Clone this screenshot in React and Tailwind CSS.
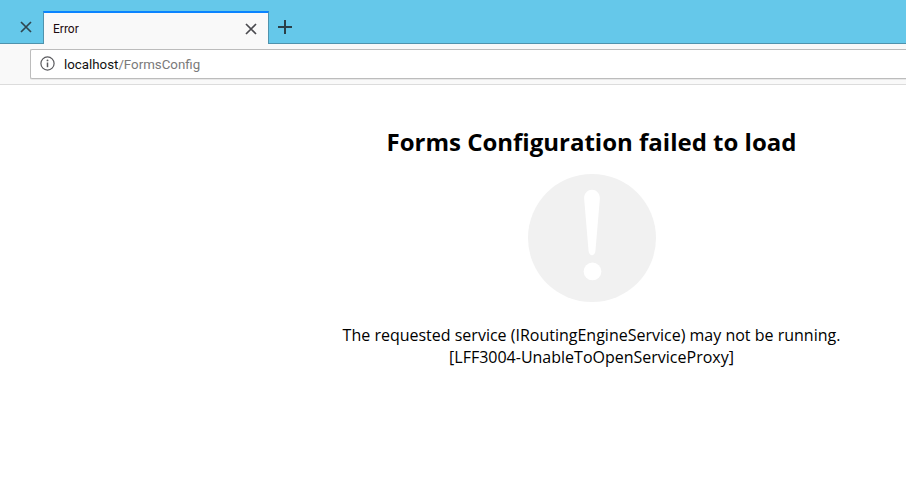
export default function App() {
  return (
    <div className="w-[906px] h-[481px] bg-white overflow-hidden flex flex-col font-['Open_Sans',sans-serif]">
      <div className="h-[44px] bg-[#65c8ea] border-b border-[#4f93ad] flex items-end relative">
        <div className="w-[43px] h-[33px] flex items-center justify-center pl-[9px]">
          <svg width="12" height="12" viewBox="0 0 12 12" className="mt-[1px]"><path d="M1 1 11 11M11 1 1 11" stroke="#2f4650" strokeWidth="1.7" fill="none" /></svg>
        </div>
        <div className="w-[226px] h-[33px] -mb-px bg-[#f9f9f9] border-t-2 border-[#0a84ff] border-x border-x-[#4f93ad] flex items-center pl-[9px] pr-[11px] justify-between">
          <span className="text-[12px] text-[#1c0a10] font-['Roboto',sans-serif] leading-none">Error</span>
          <svg width="12" height="12" viewBox="0 0 12 12"><path d="M1 1 11 11M11 1 1 11" stroke="#4a4a4f" strokeWidth="1.7" fill="none" /></svg>
        </div>
        <div className="w-[32px] h-[33px] flex items-center justify-center">
          <svg width="14" height="14" viewBox="0 0 14 14"><path d="M7 0V14M0 7H14" stroke="#2a3f48" strokeWidth="2" fill="none" /></svg>
        </div>
      </div>
      <div className="h-[41px] bg-[#f9f9f9] border-b border-[#dcdcdc] pl-[30px] pt-[5px]">
        <div className="h-[30px] bg-white border border-[#bcbcbc] rounded-l-[2px] border-r-0 flex items-center pl-[9px] shadow-[0_1px_0_#e8e8e8]">
          <svg width="15" height="15" viewBox="0 0 15 15" className="mr-[9px] -mt-[1px]">
            <circle cx="7.5" cy="7.5" r="6.6" stroke="#5b5b5f" strokeWidth="1.2" fill="none" />
            <path d="M7.5 6.5V11.2" stroke="#5b5b5f" strokeWidth="1.5" />
            <circle cx="7.5" cy="4.4" r="0.95" fill="#5b5b5f" />
          </svg>
          <span className="text-[13.3px] leading-none text-[#111] font-['Roboto',sans-serif] mt-[1px]">localhost<span className="text-[#7a7a7a]">/FormsConfig</span></span>
        </div>
      </div>
      <div className="flex-1 pl-[277px] flex flex-col items-center text-black">
        <h1 className="mt-[40px] text-[24px] leading-[33px] font-bold whitespace-nowrap">Forms Configuration failed to load</h1>
        <svg width="128" height="128" viewBox="0 0 130 130" className="mt-[16px] block ml-[1px]">
          <circle cx="65" cy="65" r="65" fill="#f1f1f1" />
          <path d="M57 25C57 13 73 13 73 25L68.5 78C68 84 62 84 61.5 78Z" fill="#fff" />
          <circle cx="65.5" cy="99" r="9" fill="#fff" />
        </svg>
        <p className="mt-[22px] text-[16px] leading-[22px] text-center whitespace-nowrap">
          The requested service (IRoutingEngineService) may not be running.<br />[LFF3004-UnableToOpenServiceProxy]
        </p>
      </div>
    </div>
  );
}
